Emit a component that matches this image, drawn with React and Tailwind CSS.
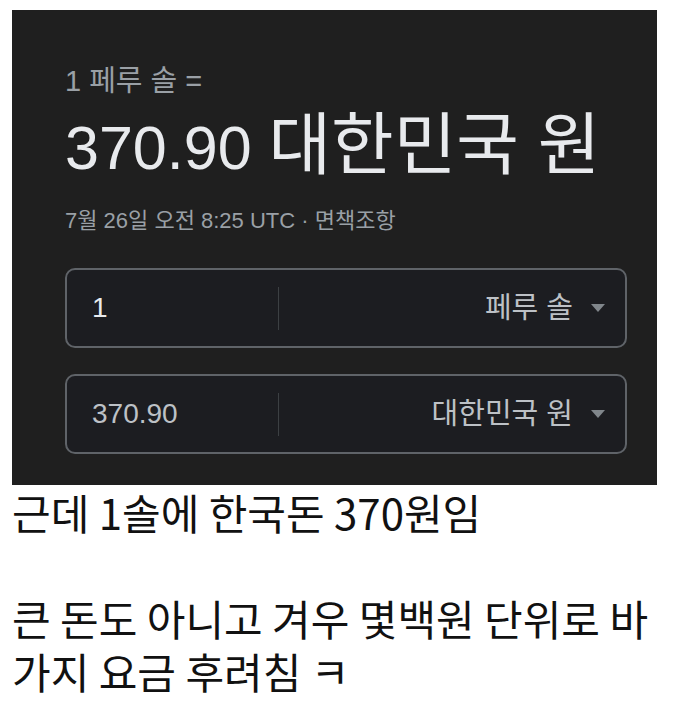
import React from 'react';

const panelFont = { fontFamily: '"Liberation Sans", "Noto Sans CJK KR", sans-serif' };

function CurrencyRow({ amount, currency, amountClass }) {
    return (
        <div className="flex h-[80px] items-center rounded-[10px] border-2 border-[#5f6368] bg-[#1c1d21]">
            <div className={`w-[211px] pl-[25px] text-[28px] leading-none ${amountClass}`}>{amount}</div>
            <div className="h-[43px] w-px bg-[#3c4043]" />
            <div className="flex flex-1 items-center justify-end gap-[18px] pr-[20px]">
                <span className="text-[29px] leading-none text-[#bdc1c6]">{currency}</span>
                <svg width="14" height="8" viewBox="0 0 14 8">
                    <path d="M0 0 L14 0 L7 8 Z" fill="#80868b" />
                </svg>
            </div>
        </div>
    );
}

export default function App() {
    return (
        <div className="min-h-[724px] w-[678px] bg-white">
            <div className="pl-[12px] pt-[10px]">
                <div className="w-[645px] bg-[#1f1f1f] pb-[31px] pl-[53px] pr-[30px] pt-[55px]" style={panelFont}>
                    <div className="text-[29px] leading-[32px] text-[#9aa0a6]">1 페루 솔 =</div>
                    <div className="mt-[13px] h-[70px] text-[61px] leading-[70px] text-[#e8eaed]">
                        370.90 <span className="text-[68px]">대한민국 원</span>
                    </div>
                    <div className="mt-[27px] text-[22px] leading-[28px] text-[#9aa0a6]">7월 26일 오전 8:25 UTC · 면책조항</div>
                    <div className="mt-[33px] flex flex-col gap-[26px]">
                        <CurrencyRow amount="1" currency="페루 솔" amountClass="text-[#e8eaed]" />
                        <CurrencyRow amount="370.90" currency="대한민국 원" amountClass="text-[#bdc1c6]" />
                    </div>
                </div>
            </div>
            <div
                className="pl-[12px] text-[42px] leading-[53px] text-[#111111]"
                style={{ fontFamily: '"Noto Sans CJK KR", sans-serif' }}
            >
                <p>근데 1솔에 한국돈 370원임</p>
                <p>&nbsp;</p>
                <p>큰 돈도 아니고 겨우 몇백원 단위로 바</p>
                <p>가지 요금 후려침 ㅋ</p>
            </div>
        </div>
    );
}
